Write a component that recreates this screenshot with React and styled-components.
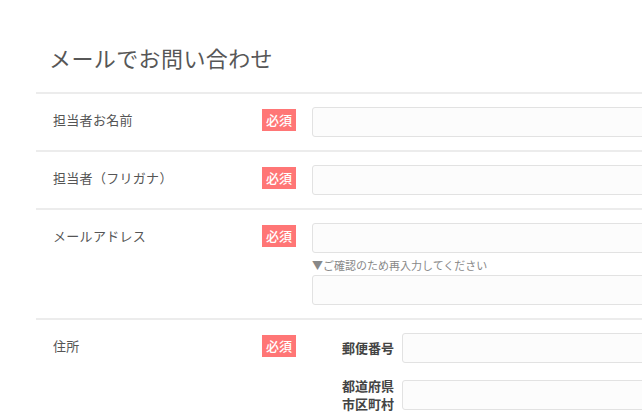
import styled, { createGlobalStyle } from "styled-components"

const GlobalStyle = createGlobalStyle`
  html, body {
    margin: 0;
    padding: 0;
    background: #fff;
    overflow: hidden;
  }
  body {
    font-family: "Noto Sans CJK JP", "Noto Sans", sans-serif;
    color: #555;
  }
`

const fields = [
  { label: "担当者お名前" },
  { label: "担当者（フリガナ）" },
  { label: "メールアドレス", confirm: true },
]

export default function App() {
  return (
    <>
      <GlobalStyle />
      <Section>
        <Title>メールでお問い合わせ</Title>
        <Form>
          {fields.map((f) => (
            <Row key={f.label}>
              <Label>{f.label}</Label>
              <Required>必須</Required>
              <Field>
                <Input type="text" />
                {f.confirm && (
                  <>
                    <Note>▼ご確認のため再入力してください</Note>
                    <Input type="text" />
                  </>
                )}
              </Field>
            </Row>
          ))}
          <Row>
            <Label>住所</Label>
            <Required>必須</Required>
            <AddressGrid>
              <SubLabel>郵便番号</SubLabel>
              <Input type="text" />
              <SubLabel>
                都道府県
                <br />
                市区町村
              </SubLabel>
              <Input type="text" />
            </AddressGrid>
          </Row>
        </Form>
      </Section>
    </>
  )
}

const Section = styled.section`
  width: 700px;
  margin-left: 36px;
  padding-top: 41px;
`

const Title = styled.h2`
  margin: 0 0 18px;
  padding-left: 13px;
  font-size: 22px;
  line-height: 33px;
  font-weight: 400;
  letter-spacing: 0.4px;
  color: #575757;
`

const Form = styled.div`
  display: flex;
  flex-direction: column;
`

const Row = styled.div`
  display: grid;
  grid-template-columns: 209px 50px 1fr;
  align-items: start;
  padding: 13px 0 13px 17px;
  border-top: 2px solid #ececec;
`

const Label = styled.div`
  padding-top: 3px;
  font-size: 13px;
  line-height: 1.5;
  letter-spacing: 0.3px;
  color: #555;
`

const Required = styled.span`
  justify-self: start;
  margin-top: 2px;
  padding: 0 4px;
  height: 22px;
  line-height: 22px;
  font-size: 13px;
  font-weight: 500;
  color: #fff;
  background: #ff7676;
`

const Field = styled.div`
  display: flex;
  flex-direction: column;
`

const Input = styled.input`
  box-sizing: border-box;
  width: 100%;
  height: 30px;
  margin: 0;
  padding: 0 8px;
  border: 1px solid #e2e2e2;
  border-radius: 3px;
  background: #fcfcfc;
  font-family: inherit;
  font-size: 13px;
  outline: none;
`

const Note = styled.p`
  margin: 4px 0 2px;
  font-size: 11px;
  line-height: 16px;
  color: #888;
`

const AddressGrid = styled.div`
  display: grid;
  grid-template-columns: 90px 1fr;
  align-items: center;
  row-gap: 14px;
`

const SubLabel = styled.div`
  padding-right: 8px;
  text-align: right;
  font-size: 13px;
  font-weight: 700;
  line-height: 18px;
  color: #444;
`
